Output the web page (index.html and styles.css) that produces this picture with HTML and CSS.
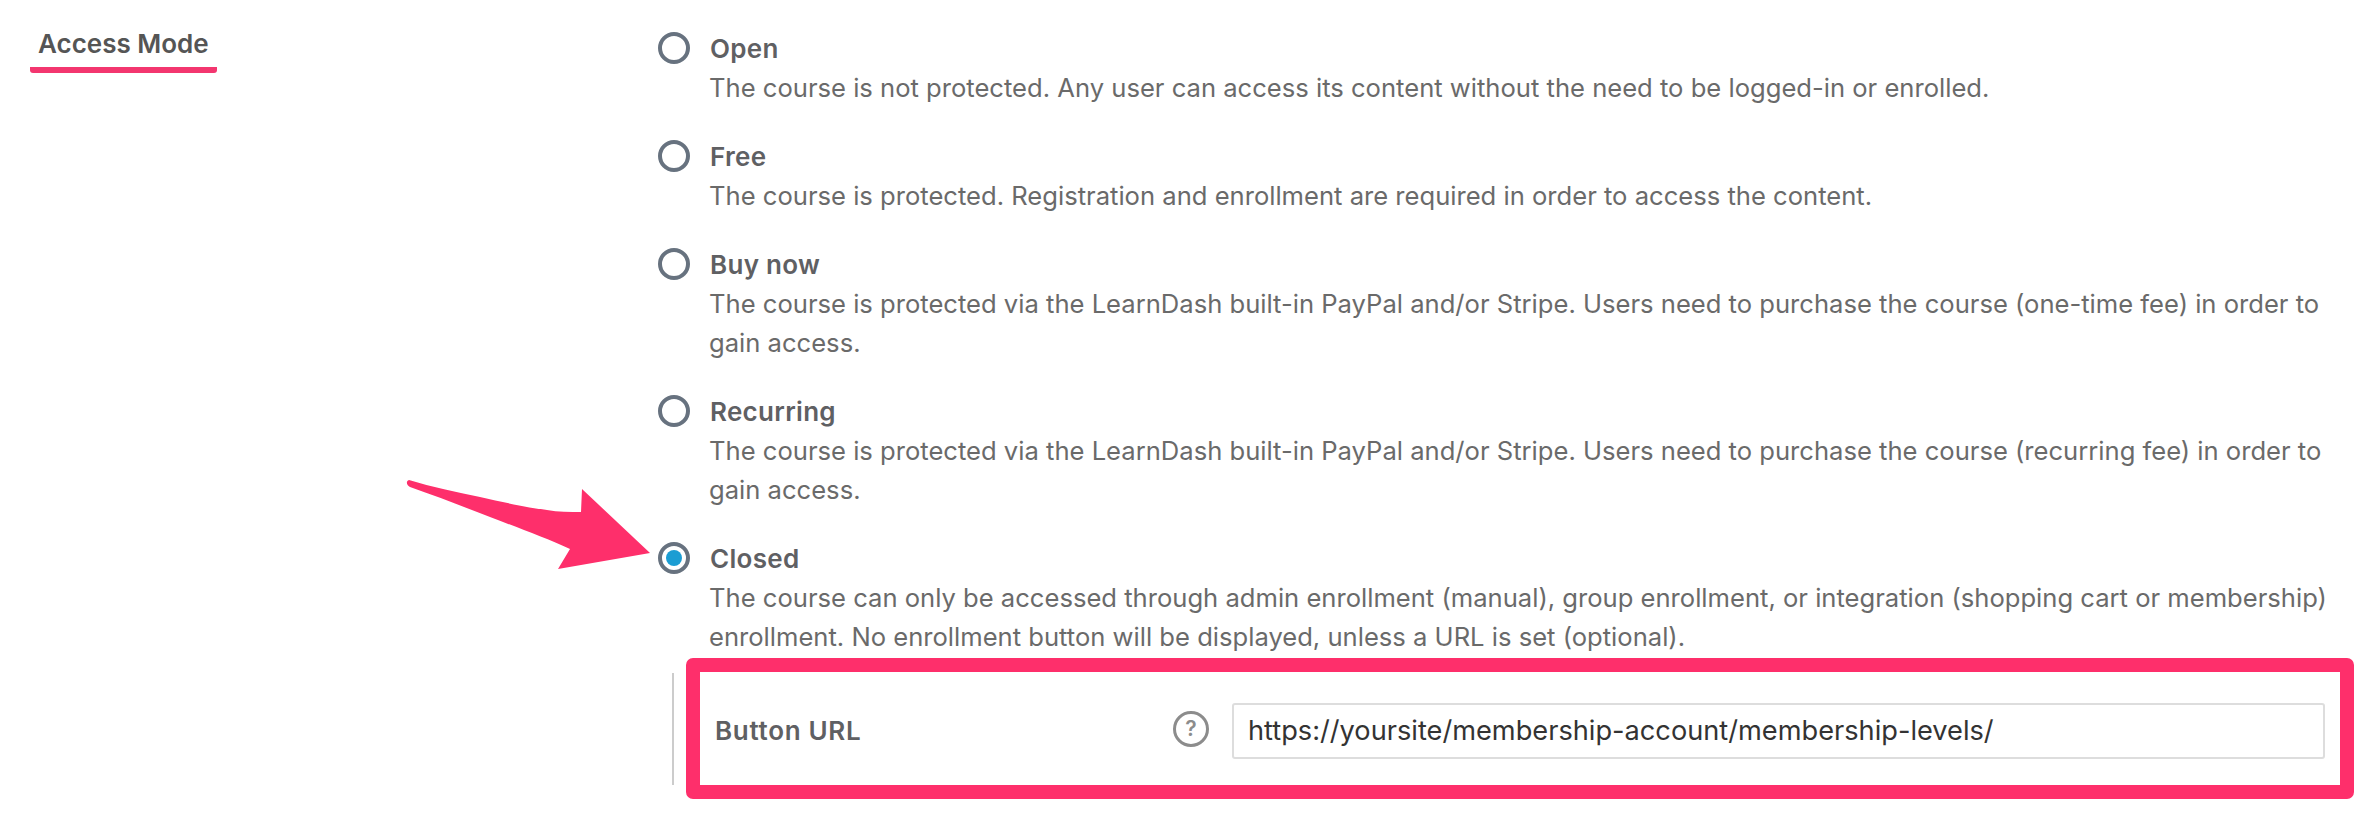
FILE: index.html
```html
<!DOCTYPE html>
<html lang="en">
<head>
    <meta charset="UTF-8">
    <title>Access Mode</title>
    <link rel="stylesheet" href="styles.css">
</head>
<body>
    <div class="setting">
        <div class="setting-label">
            <span class="label-text">Access Mode</span>
        </div>
        <div class="setting-options">
            <div class="option">
                <span class="radio"></span>
                <div class="option-body">
                    <div class="option-title">Open</div>
                    <p class="option-desc">The course is not protected. Any user can access its content without the need to be logged-in or enrolled.</p>
                </div>
            </div>
            <div class="option">
                <span class="radio"></span>
                <div class="option-body">
                    <div class="option-title">Free</div>
                    <p class="option-desc">The course is protected. Registration and enrollment are required in order to access the content.</p>
                </div>
            </div>
            <div class="option">
                <span class="radio"></span>
                <div class="option-body">
                    <div class="option-title">Buy now</div>
                    <p class="option-desc">The course is protected via the LearnDash built-in PayPal and/or Stripe. Users need to purchase the course (one-time fee) in order to gain access.</p>
                </div>
            </div>
            <div class="option">
                <span class="radio"></span>
                <div class="option-body">
                    <div class="option-title">Recurring</div>
                    <p class="option-desc">The course is protected via the LearnDash built-in PayPal and/or Stripe. Users need to purchase the course (recurring fee) in order to gain access.</p>
                </div>
            </div>
            <div class="option option-last">
                <span class="radio checked"></span>
                <div class="option-body">
                    <div class="option-title">Closed</div>
                    <p class="option-desc">The course can only be accessed through admin enrollment (manual), group enrollment, or integration (shopping cart or membership) enrollment. No enrollment button will be displayed, unless a URL is set (optional).</p>
                </div>
            </div>
            <div class="sub-setting">
                <span class="sub-line"></span>
                <div class="sub-box">
                    <label class="sub-label" for="button-url">Button URL</label>
                    <span class="help">?</span>
                    <input class="sub-input" id="button-url" type="text" value="https://yoursite/membership-account/membership-levels/">
                </div>
            </div>
        </div>
    </div>

    <svg class="arrow" width="250" height="100" viewBox="0 0 250 100">
        <path d="M3 3 C26 10 50 15 74 20 C100 26 125 31 141 33 C152 35 164 35 175 35 L176 12 L244 76 L152 92 L164 72 C140 61 110 50 84 40 C58 30 30 19 4 10 C0 8 0 4 3 3 Z" fill="#fe2f6b"/>
    </svg>
</body>
</html>
```

FILE: styles.css
```css
* {
    box-sizing: border-box;
}
body {
    margin: 0;
    background: #fff;
    font-family: Inter, "Liberation Sans", sans-serif;
    color: #666;
    position: relative;
    height: 816px;
    overflow: hidden;
}
.setting {
    display: flex;
    padding: 30px 0 0 30px;
}
.setting-label {
    width: 628px;
    flex-shrink: 0;
}
.label-text {
    display: inline-block;
    padding: 0 8px 9px;
    border-bottom: 6px solid #f3366f;
    border-radius: 3px;
    font-size: 26px;
    line-height: 28px;
    font-weight: 600;
    color: #555;
}
.setting-options {
    width: 1696px;
}
.option {
    display: flex;
    gap: 19px;
    margin-bottom: 31px;
}
.option-last {
    margin-bottom: 2px;
}
.radio {
    width: 32px;
    height: 32px;
    margin-top: 2px;
    flex-shrink: 0;
    border: 4px solid #67727f;
    border-radius: 50%;
    background: #fff;
}
.radio.checked {
    padding: 4px;
    background: #1b9dd3 content-box;
}
.option-title {
    margin-left: 1px;
    font-size: 26px;
    line-height: 38px;
    font-weight: 600;
    letter-spacing: 0.3px;
    color: #5f6063;
}
.option-desc {
    margin: 0;
    max-width: 1625px;
    font-size: 25.6px;
    line-height: 39px;
    color: #6a6a6a;
}
.sub-setting {
    display: flex;
    align-items: center;
    gap: 12px;
    margin-left: 14px;
}
.sub-line {
    width: 2px;
    height: 112px;
    background: #ccc;
}
.sub-box {
    display: flex;
    align-items: center;
    flex: 0 0 1668px;
    height: 141px;
    padding: 4px 15px 0;
    border: 14px solid #fe2f6b;
    border-radius: 7px;
}
.sub-label {
    flex: 0 0 458px;
    font-size: 26px;
    font-weight: 600;
    letter-spacing: 0.7px;
    color: #5f6063;
}
.help {
    flex: 0 0 36px;
    height: 36px;
    margin-top: -3px;
    border: 3px solid #8c8c8c;
    border-radius: 50%;
    font-size: 21px;
    line-height: 30px;
    font-weight: 600;
    text-align: center;
    color: #8c8c8c;
}
.sub-input {
    flex: 1;
    height: 56px;
    margin-left: 23px;
    padding: 0 14px;
    border: 2px solid #ddd;
    border-radius: 3px;
    font-family: inherit;
    font-size: 27.2px;
    color: #333;
}
.arrow {
    position: absolute;
    left: 406px;
    top: 477px;
}
```
